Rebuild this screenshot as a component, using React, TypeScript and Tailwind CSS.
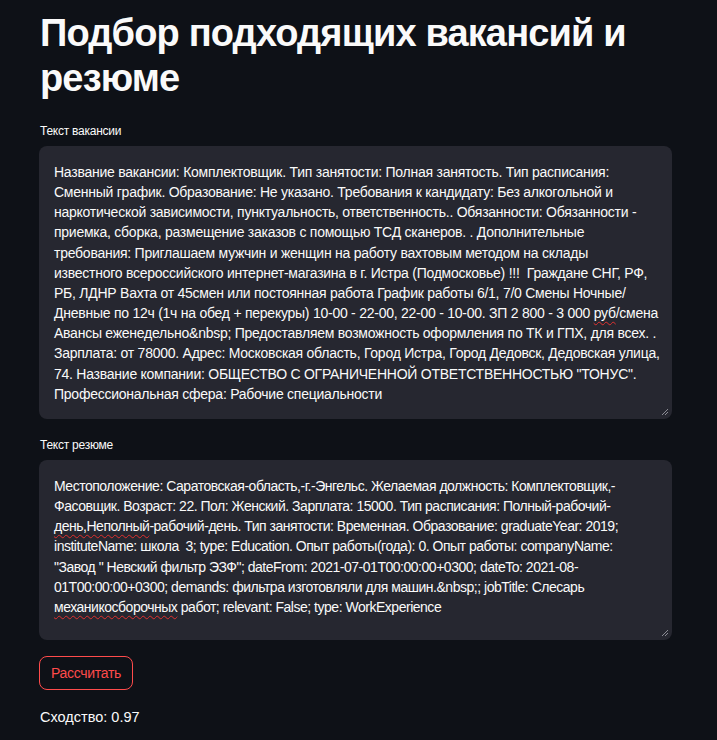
const vacancy = [
  "Название вакансии: Комплектовщик. Тип занятости: Полная занятость. Тип расписания:",
  "Сменный график. Образование: Не указано. Требования к кандидату: Без алкогольной и",
  "наркотической зависимости, пунктуальность, ответственность.. Обязанности: Обязанности -",
  "приемка, сборка, размещение заказов с помощью ТСД сканеров. . Дополнительные",
  "требования: Приглашаем мужчин и женщин на работу вахтовым методом на склады",
  "известного всероссийского интернет-магазина в г. Истра (Подмосковье) !!!  Граждане СНГ, РФ,",
  "РБ, ЛДНР Вахта от 45смен или постоянная работа График работы 6/1, 7/0 Смены Ночные/",
  "__RUB__",
  "Авансы еженедельно&nbsp; Предоставляем возможность оформления по ТК и ГПХ, для всех. .",
  "Зарплата: от 78000. Адрес: Московская область, Город Истра, Город Дедовск, Дедовская улица,",
  "74. Название компании: ОБЩЕСТВО С ОГРАНИЧЕННОЙ ОТВЕТСТВЕННОСТЬЮ \"ТОНУС\".",
  "Профессиональная сфера: Рабочие специальности",
];

const Wavy = ({ children }: { children: React.ReactNode }) => (
  <span className="underline decoration-wavy decoration-[#e0312f] decoration-1 underline-offset-[3px]">
    {children}
  </span>
);

function Line({ text }: { text: string }) {
  if (text === "__RUB__") {
    return (
      <div>
        Дневные по 12ч (1ч на обед + перекуры) 10-00 - 22-00, 22-00 - 10-00. ЗП 2 800 - 3 000 <Wavy>руб</Wavy>/смена
      </div>
    );
  }
  return <div>{text}</div>;
}

function Grip() {
  return (
    <svg className="absolute right-[3px] bottom-[3px]" width="8" height="8" viewBox="0 0 8 8">
      <path d="M7 1 L1 7 M7 4 L4 7" stroke="#8b8c94" strokeWidth="1" />
    </svg>
  );
}

function Area({ children, className }: { children: React.ReactNode; className: string }) {
  return (
    <div className={`relative bg-[#262730] rounded-lg px-[15px] pt-[16px] text-[14px] leading-[20.15px] text-[#fafafa] whitespace-pre ${className}`}>
      {children}
      <Grip />
    </div>
  );
}

export default function App() {
  return (
    <main className="min-h-[740px] bg-[#0e1117] text-[#fafafa] font-['Liberation_Sans',sans-serif]">
      <div className="w-[633px] ml-[39px] pt-[11px]">
        <h1 className="text-[38px] leading-[45px] font-bold tracking-[-0.85px] pl-[1px]">
          Подбор подходящих вакансий и<br />резюме
        </h1>
        <div className="mt-[21px] text-[12px] leading-[18px] pl-[1px] tracking-[-0.25px]">Текст вакансии</div>
        <div className="mt-[6px]">
          <Area className="h-[273px] tracking-[-0.25px]">
            {vacancy.map((t, i) => (
              <Line key={i} text={t} />
            ))}
          </Area>
        </div>
        <div className="mt-[17px] text-[12px] leading-[18px] pl-[1px] tracking-[-0.25px]">Текст резюме</div>
        <div className="mt-[6px]">
          <Area className="h-[180px] tracking-[-0.48px]">
            <div>Местоположение: Саратовская-область,-г.-Энгельс. Желаемая должность: Комплектовщик,-</div>
            <div>Фасовщик. Возраст: 22. Пол: Женский. Зарплата: 15000. Тип расписания: Полный-рабочий-</div>
            <div>
              <Wavy>день,Неполный</Wavy>-рабочий-день. Тип занятости: Временная. Образование: graduateYear: 2019;
            </div>
            <div>instituteName: школа  3; type: Education. Опыт работы(года): 0. Опыт работы: companyName:</div>
            <div>"Завод " Невский фильтр ЭЗФ"; dateFrom: 2021-07-01T00:00:00+0300; dateTo: 2021-08-</div>
            <div>01T00:00:00+0300; demands: фильтра изготовляли для машин.&amp;nbsp;; jobTitle: Слесарь</div>
            <div>
              <Wavy>механикосборочных</Wavy> работ; relevant: False; type: WorkExperience
            </div>
          </Area>
        </div>
        <button className="mt-[16px] h-[34px] px-[11px] rounded-lg border border-[#ff4b4b] text-[#ff4b4b] text-[14px] tracking-[-0.3px] bg-transparent">
          Рассчитать
        </button>
        <div className="mt-[17px] text-[14.5px] leading-[20px] pl-[1px]">Сходство: 0.97</div>
      </div>
    </main>
  );
}
